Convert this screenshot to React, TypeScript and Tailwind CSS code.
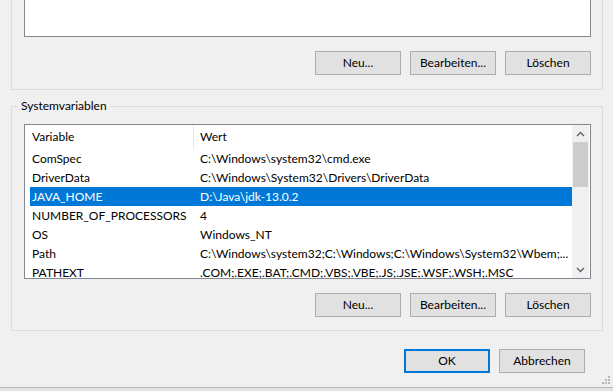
import { type FC } from 'react';

// Zeilen der Systemvariablen (Name, Wert)
const SYSTEM_VARS: Array<[string, string]> = [
    ['ComSpec', 'C:\\Windows\\system32\\cmd.exe'],
    ['DriverData', 'C:\\Windows\\System32\\Drivers\\DriverData'],
    ['JAVA_HOME', 'D:\\Java\\jdk-13.0.2'],
    ['NUMBER_OF_PROCESSORS', '4'],
    ['OS', 'Windows_NT'],
    ['Path', 'C:\\Windows\\system32;C:\\Windows;C:\\Windows\\System32\\Wbem;...'],
    ['PATHEXT', '.COM;.EXE;.BAT;.CMD;.VBS;.VBE;.JS;.JSE;.WSF;.WSH;.MSC'],
];

const SELECTED = 'JAVA_HOME';

const WinButton: FC<{ label: string; isDefault?: boolean }> = ({ label, isDefault }) => (
    <button
        type="button"
        className={`w-[86px] h-[24px] flex items-center justify-center bg-[#e1e1e1] text-black leading-none ${
            isDefault ? 'border-2 border-[#0078d7]' : 'border border-[#adadad]'
        }`}
    >
        {label}
    </button>
);

const ButtonRow: FC = () => (
    <div className="flex justify-end gap-[9px] mt-[14px]">
        <WinButton label="Neu..." />
        <WinButton label="Bearbeiten..." />
        <WinButton label="Löschen" />
    </div>
);

const Chevron: FC<{ down?: boolean }> = ({ down }) => (
    <svg width="9" height="6" viewBox="0 0 9 6" className={down ? 'rotate-180' : ''}>
        <path d="M1 5 L4.5 1.5 L8 5" fill="none" stroke="#606060" strokeWidth="1.4" />
    </svg>
);

const Scrollbar: FC = () => (
    <div className="w-[17px] flex flex-col bg-[#f0f0f0]">
        <div className="h-[17px] flex items-center justify-center">
            <Chevron />
        </div>
        <div className="h-[45px] mx-[1px] bg-[#cdcdcd]" />
        <div className="flex-1" />
        <div className="h-[17px] flex items-center justify-center">
            <Chevron down />
        </div>
    </div>
);

const SizeGrip: FC = () => (
    <svg width="10" height="10" viewBox="0 0 10 10" className="absolute right-[2px] bottom-[5px]">
        {[
            [7, 0],
            [4, 3],
            [7, 3],
            [1, 6],
            [4, 6],
            [7, 6],
        ].map(([x, y]) => (
            <rect key={`${x}-${y}`} x={x} y={y} width="2" height="2" fill="#b8b8b8" />
        ))}
    </svg>
);

const App: FC = () => {
    return (
        <div
            className="relative w-[613px] h-[391px] overflow-hidden bg-[#f0f0f0] text-[12px] text-black flex flex-col"
            style={{ fontFamily: 'Lato, "Liberation Sans", sans-serif' }}
        >
            <div className="pl-[11px] pr-[10px]">
                {/* Benutzervariablen (oben abgeschnitten) */}
                <div className="-mt-[100px] border border-[#dcdcdc] pl-[12px] pr-[11px] pt-[20px] pb-[14px]">
                    <div className="h-[116px] border border-[#828790] bg-white" />
                    <ButtonRow />
                </div>

                {/* Systemvariablen */}
                <fieldset className="mt-[8px] border border-[#dcdcdc] pl-[12px] pr-[11px] pt-[10px] pb-[13px]">
                    <legend className="-ml-[6px] px-[3px] leading-[16px]">Systemvariablen</legend>
                    <div className="h-[155px] border border-[#828790] bg-white flex pr-[1px] overflow-hidden">
                        <div className="flex-1 flex flex-col overflow-hidden">
                            <div className="h-[24px] flex shrink-0">
                                <div className="w-[169px] pl-[7px] border-r border-[#e5e5e5] flex items-center">Variable</div>
                                <div className="pl-[6px] flex items-center">Wert</div>
                            </div>
                            {SYSTEM_VARS.map(([name, value]) => {
                                const isSelected = name === SELECTED;
                                return (
                                    <div key={name} className="h-[19px] shrink-0 pl-[5px] flex">
                                        <div
                                            className={`flex-1 flex items-center whitespace-nowrap ${
                                                isSelected ? 'bg-[#0078d7] text-white' : ''
                                            }`}
                                        >
                                            <div className="w-[163px] pl-[2px] shrink-0">{name}</div>
                                            <div className="pl-[7px]">{value}</div>
                                        </div>
                                    </div>
                                );
                            })}
                        </div>
                        <Scrollbar />
                    </div>
                    <ButtonRow />
                </fieldset>
            </div>

            {/* OK / Abbrechen */}
            <div className="flex justify-end gap-[9px] pr-[28px] mt-[18px]">
                <WinButton label="OK" isDefault />
                <WinButton label="Abbrechen" />
            </div>

            <div className="mt-[14px] flex-1 border-t border-[#b9b9b9] bg-[#e3e3e3]" />
            <SizeGrip />
        </div>
    );
};

export default App;
